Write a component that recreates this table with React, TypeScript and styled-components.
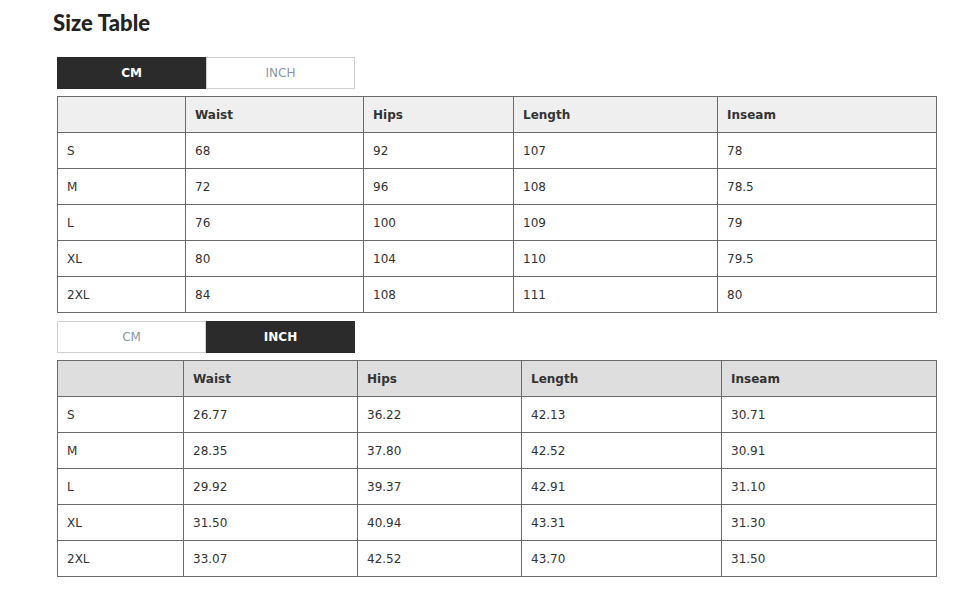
import React from "react";
import styled, { createGlobalStyle } from "styled-components";

const Global = createGlobalStyle`
  html, body { margin: 0; padding: 0; background: #fff; }
  body { font-family: "DejaVu Sans", Verdana, sans-serif; }
`;

const Page = styled.div`
  padding: 10px 0 0 57px;
  width: 879px;
`;

const Title = styled.h2`
  margin: 0 0 21px -4px;
  font-family: Lato, "Noto Sans", sans-serif;
  font-weight: 900;
  font-size: 22px;
  line-height: 26px;
  color: #222;
  letter-spacing: 0.1px;
`;

const Tabs = styled.div`
  display: flex;
  width: 298px;
  height: 32px;
  margin-bottom: 7px;
`;

const Tab = styled.div<{ $active: boolean }>`
  flex: 1;
  display: flex;
  align-items: center;
  justify-content: center;
  box-sizing: border-box;
  font-size: 12px;
  font-weight: ${(p) => (p.$active ? 700 : 400)};
  color: ${(p) => (p.$active ? "#fff" : "#8797a3")};
  background: ${(p) => (p.$active ? "#2b2b2b" : "#fff")};
  border: 1px solid ${(p) => (p.$active ? "#2b2b2b" : "#cfcfcf")};
`;

const Table = styled.table<{ $head: string }>`
  border-collapse: collapse;
  width: 879px;
  table-layout: fixed;
  font-size: 12px;
  color: #333;
  margin-bottom: 8px;

  th, td {
    border: 1px solid #6a6a6a;
    height: 36px;
    padding: 0 9px;
    text-align: left;
    box-sizing: border-box;
  }
  th {
    background: ${(p) => p.$head};
    font-weight: 700;
    color: #333;
  }
`;

type Data = { widths: number[]; rows: string[][]; head: string; active: "CM" | "INCH" };

const headers = ["", "Waist", "Hips", "Length", "Inseam"];

const cm: Data = {
  widths: [128, 178, 150, 204, 219],
  head: "#efefef",
  active: "CM",
  rows: [
    ["S", "68", "92", "107", "78"],
    ["M", "72", "96", "108", "78.5"],
    ["L", "76", "100", "109", "79"],
    ["XL", "80", "104", "110", "79.5"],
    ["2XL", "84", "108", "111", "80"],
  ],
};

const inch: Data = {
  widths: [126, 174, 164, 200, 215],
  head: "#dedede",
  active: "INCH",
  rows: [
    ["S", "26.77", "36.22", "42.13", "30.71"],
    ["M", "28.35", "37.80", "42.52", "30.91"],
    ["L", "29.92", "39.37", "42.91", "31.10"],
    ["XL", "31.50", "40.94", "43.31", "31.30"],
    ["2XL", "33.07", "42.52", "43.70", "31.50"],
  ],
};

function SizeBlock({ d }: { d: Data }) {
  return (
    <>
      <Tabs>
        <Tab $active={d.active === "CM"}>CM</Tab>
        <Tab $active={d.active === "INCH"}>INCH</Tab>
      </Tabs>
      <Table $head={d.head}>
        <colgroup>
          {d.widths.map((w, i) => (
            <col key={i} style={{ width: w }} />
          ))}
        </colgroup>
        <thead>
          <tr>
            {headers.map((h, i) => (
              <th key={i}>{h}</th>
            ))}
          </tr>
        </thead>
        <tbody>
          {d.rows.map((r, i) => (
            <tr key={i}>
              {r.map((c, j) => (
                <td key={j}>{c}</td>
              ))}
            </tr>
          ))}
        </tbody>
      </Table>
    </>
  );
}

export default function App() {
  return (
    <>
      <Global />
      <Page>
        <Title>Size Table</Title>
        <SizeBlock d={cm} />
        <SizeBlock d={inch} />
      </Page>
    </>
  );
}
